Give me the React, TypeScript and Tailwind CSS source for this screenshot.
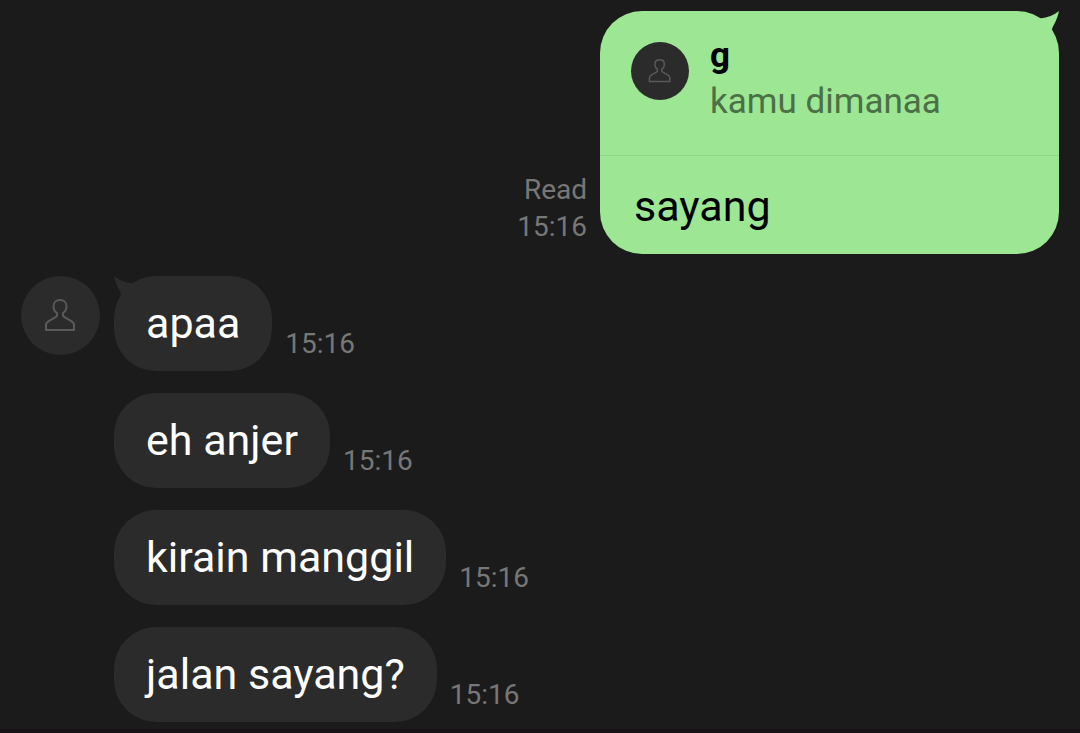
import React from "react";

type IncomingMessage = {
  text: string;
  time: string;
};

const incoming: IncomingMessage[] = [
  { text: "apaa", time: "15:16" },
  { text: "eh anjer", time: "15:16" },
  { text: "kirain manggil", time: "15:16" },
  { text: "jalan sayang?", time: "15:16" },
];

const PersonIcon: React.FC<{ className: string }> = ({ className }) => (
  <svg
    viewBox="0 0 33 35"
    fill="none"
    stroke="currentColor"
    strokeWidth={2}
    className={className}
    aria-hidden="true"
  >
    <path d="M13 17.5V15C10.8 13.5 9.5 11.2 9.5 8.4C9.5 4.6 12.2 2 16 2S22.5 4.6 22.5 8.4C22.5 11.2 21.2 13.5 19 15V17.5C19.2 18.4 20 18.9 21 19.4L27.6 23.3C29.2 24.3 30 25.3 30 27V32H2V27C2 25.3 2.8 24.3 4.4 23.3L11 19.4C12 18.9 12.8 18.4 13 17.5Z" />
  </svg>
);

const Avatar: React.FC<{ size: "sm" | "lg" }> = ({ size }) => (
  <div
    className={`flex shrink-0 items-center justify-center rounded-full bg-[#2b2b2b] text-[#5a5a5a] ${
      size === "lg" ? "size-[79px]" : "size-[58px]"
    }`}
  >
    <PersonIcon className={size === "lg" ? "h-[35px] w-[33px]" : "h-[26px] w-6"} />
  </div>
);

// Little horn that sits over the top corner of a bubble
const Tail: React.FC<{ className: string }> = ({ className }) => (
  <svg
    viewBox="0 0 24 24"
    fill="currentColor"
    className={`absolute top-0 size-6 ${className}`}
    aria-hidden="true"
  >
    <path d="M0 0C5 4 11 6.5 19 7.5L24 24L8 20C5 13 1.5 8 0 0Z" />
  </svg>
);

const SentMessage: React.FC = () => (
  <div className="flex items-end justify-end gap-[13px]">
    <div className="pb-[9px] text-right text-[28px] leading-[37px] text-[#777777]">
      <p>Read</p>
      <p>15:16</p>
    </div>
    <div className="relative w-[459px] rounded-[42px] bg-[#9de693] text-black">
      <Tail className="right-0 -scale-x-100 text-[#9de693]" />
      <div className="flex h-[145px] gap-[21px] border-b border-[#8fd586] pt-[31px] pl-[31px]">
        <Avatar size="sm" />
        <div className="-mt-[9px] text-[35px] leading-[46px]">
          <p className="font-bold">g</p>
          <p className="text-[#4b6f46]">kamu dimanaa</p>
        </div>
      </div>
      <p className="px-[34px] pt-[25px] pb-[23px] text-[43px] leading-[50px]">sayang</p>
    </div>
  </div>
);

const ReceivedMessage: React.FC<{ message: IncomingMessage; first: boolean }> = ({
  message,
  first,
}) => (
  <li className="flex items-end gap-[13px]">
    <div className="relative rounded-[42px] bg-[#2b2b2b] px-8 pt-[22px] pb-[23px] text-[43px] leading-[50px] text-white">
      {first && <Tail className="left-0 text-[#2b2b2b]" />}
      <p>{message.text}</p>
    </div>
    <time className="pb-[9px] text-[28px] leading-[37px] text-[#777777]">{message.time}</time>
  </li>
);

export default function App() {
  return (
    <main className="min-h-screen border-b-4 border-[#171215] bg-[#1b1b1b] px-[21px] pt-[11px] pb-[7px] font-[Roboto,sans-serif]">
      <SentMessage />
      <div className="mt-[22px] flex items-start gap-[14px]">
        <Avatar size="lg" />
        <ul className="flex flex-col gap-[22px]">
          {incoming.map((message, i) => (
            <ReceivedMessage key={message.text} message={message} first={i === 0} />
          ))}
        </ul>
      </div>
    </main>
  );
}
